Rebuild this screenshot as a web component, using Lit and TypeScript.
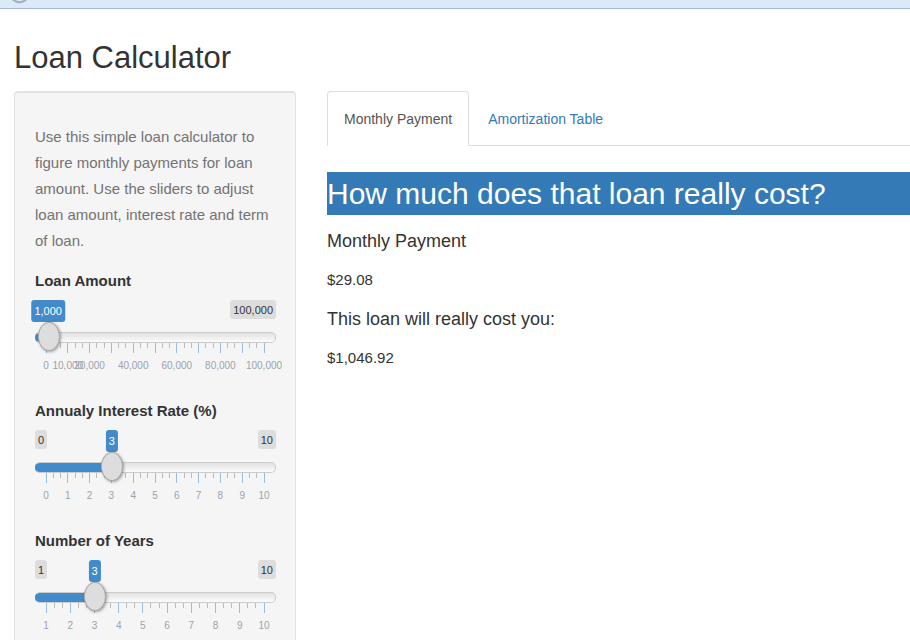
import { LitElement, html, css, svg } from "lit";
import { customElement, property, state } from "lit/decorators.js";

const grouped = (n: number) => n.toLocaleString("en-US");

@customElement("range-field")
class RangeField extends LitElement {
  @property() label = "";
  @property({ type: Number }) min = 0;
  @property({ type: Number }) max = 10;
  @property({ type: Number }) value = 0;
  @property({ type: Number }) step = 1;
  @property({ type: Number }) intervals = 10;
  @property({ type: Array }) marks: number[] = [];

  static styles = css`
    :host {
      display: block;
      height: 130px;
    }
    .name {
      display: block;
      font-weight: bold;
      line-height: 26px;
      margin-bottom: 6px;
    }
    .bubbles {
      position: relative;
      display: flex;
      justify-content: space-between;
      height: 22px;
      font-size: 11px;
      line-height: 20px;
    }
    .limit {
      height: 19px;
      padding: 0 3px;
      border-radius: 3px;
      background: #ddd;
    }
    .hidden {
      visibility: hidden;
    }
    .current {
      position: absolute;
      top: 0;
      padding: 0 3px;
      line-height: 22px;
      border-radius: 3px;
      background: #428bca;
      color: #fff;
      transform: translateX(-50%);
    }
    .slider {
      display: block;
      appearance: none;
      width: 100%;
      height: 30px;
      margin: 0;
      background: none;
      position: relative;
      cursor: pointer;
    }
    .slider::-webkit-slider-runnable-track {
      box-sizing: border-box;
      height: 11px;
      border: 1px solid #ccc;
      border-radius: 5px;
      background:
        linear-gradient(#428bca, #428bca) 0 0 / var(--fill) 100% no-repeat border-box,
        linear-gradient(#dedede, #fff) border-box;
    }
    .filled::-webkit-slider-runnable-track {
      border-left-color: #428bca;
    }
    .slider::-webkit-slider-thumb {
      appearance: none;
      box-sizing: border-box;
      width: 22px;
      height: 29px;
      margin-top: -11px;
      border: 1px solid #aaa;
      border-radius: 50%;
      background: #ddd;
      box-shadow: 1px 1px 3px rgba(0, 0, 0, 0.35);
    }
    .scale {
      margin: -9px 12px 0 11px;
    }
    .ticks {
      display: block;
      width: 100%;
      height: 10px;
      overflow: visible;
      shape-rendering: crispEdges;
    }
    .major {
      stroke: #99bddd;
    }
    .minor {
      stroke: #bbb;
    }
    .marks {
      position: relative;
      height: 14px;
      margin-top: 6px;
      font-size: 10px;
      line-height: 14px;
      color: #99a4ac;
    }
    .mark {
      position: absolute;
      transform: translateX(-50%);
    }
  `;

  private fraction(v: number) {
    return (v - this.min) / (this.max - this.min);
  }

  private onInput(e: Event) {
    this.value = Number((e.target as HTMLInputElement).value);
    this.dispatchEvent(new CustomEvent("value-change", { detail: this.value }));
  }

  render() {
    const f = this.fraction(this.value);
    const centre = `calc(11px + (100% - 22px) * ${f})`;
    const count = this.intervals * 3;
    const ticks = Array.from({ length: count + 1 }, (_, i) => {
      const x = `${(i / count) * 100}%`;
      const major = i % 3 === 0;
      return svg`<line class=${major ? "major" : "minor"} x1=${x} x2=${x} y1="0" y2=${major ? 10 : 5}></line>`;
    });
    return html`
      <label class="name" for="slider">${this.label}</label>
      <div class="bubbles">
        <span class="limit ${f < 0.08 ? "hidden" : ""}">${grouped(this.min)}</span>
        <span class="limit ${f > 0.92 ? "hidden" : ""}">${grouped(this.max)}</span>
        <output class="current" for="slider" style="left:${centre}">${grouped(this.value)}</output>
      </div>
      <input class="slider filled" id="slider" type="range" min=${this.min} max=${this.max} step=${this.step}
        .value=${String(this.value)} style="--fill:${centre}" @input=${this.onInput}>
      <div class="scale" aria-hidden="true">
        <svg class="ticks">${ticks}</svg>
        <div class="marks">
          ${this.marks.map((m) => html`<span class="mark" style="left:${this.fraction(m) * 100}%">${grouped(m)}</span>`)}
        </div>
      </div>
    `;
  }
}

@customElement("app-root")
class AppRoot extends LitElement {
  @state() private amount = 1000;
  @state() private rate = 3;
  @state() private years = 3;

  static styles = css`
    :host {
      display: block;
      height: 100vh;
      overflow: hidden;
      background: #fff;
      color: #333;
      font-family: "Liberation Sans", Arial, sans-serif;
      font-size: 15px;
      line-height: 26px;
    }
    .strip {
      height: 8px;
      border-bottom: 1px solid #a3bbd3;
      background: #dce9f6;
    }
    .strip-icon {
      display: block;
      width: 16px;
      height: 4px;
      margin-left: 12px;
    }
    .page {
      padding-left: 14px;
    }
    .title {
      margin: 0;
      padding: 27px 0 11px;
      font-size: 31px;
      font-weight: normal;
      line-height: 44px;
    }
    .columns {
      display: grid;
      grid-template-columns: 282fr 583fr;
      gap: 31px;
      align-items: start;
    }
    .well {
      min-width: 0;
      padding: 31px 19px 19px 20px;
      border: 1px solid #e3e3e3;
      border-top-width: 2px;
      border-radius: 4px;
      background: #f5f5f5;
    }
    .help {
      margin: 0 0 14px;
      color: #737373;
    }
    .tabs {
      display: flex;
      border-bottom: 1px solid #ddd;
      font-size: 14px;
    }
    .tab {
      padding: 14px 16px 13px;
      margin: 0 2px -1px 0;
      border: 1px solid transparent;
      border-radius: 4px 4px 0 0;
      color: #337ab7;
      text-decoration: none;
    }
    .active {
      border-color: #ddd;
      border-bottom-color: #fff;
      background: #fff;
      color: #555;
    }
    .banner {
      margin: 26px 0 13px;
      background: #337ab7;
      color: #fff;
      font-size: 30px;
      font-weight: normal;
      line-height: 43px;
    }
    .heading {
      margin: 0 0 13px;
      font-size: 18px;
      font-weight: normal;
      line-height: 26px;
    }
    .amount {
      margin: 0 0 13px;
    }
  `;

  private get payment() {
    const n = this.years * 12;
    const r = this.rate / 1200;
    return r === 0 ? this.amount / n : (this.amount * r) / (1 - Math.pow(1 + r, -n));
  }

  private money(v: number) {
    return v.toLocaleString("en-US", { style: "currency", currency: "USD" });
  }

  render() {
    const payment = this.payment;
    return html`
      <div class="strip">
        <svg class="strip-icon" viewBox="0 0 16 4" aria-hidden="true">
          <path d="M0 -2C3 3.500 12 3.500 15 -2" fill="none" stroke="#9fb0c3" stroke-width="2"></path>
        </svg>
      </div>
      <div class="page">
        <h1 class="title">Loan Calculator</h1>
        <div class="columns">
          <form class="well">
            <p class="help">
              Use this simple loan calculator to figure monthly payments for loan amount. Use the
              sliders to adjust loan amount, interest rate and term of loan.
            </p>
            <range-field label="Loan Amount" .min=${0} .max=${100000} .step=${1000} .value=${this.amount}
              .marks=${[0, 10000, 20000, 40000, 60000, 80000, 100000]}
              @value-change=${(e: CustomEvent) => (this.amount = e.detail)}></range-field>
            <range-field label="Annualy Interest Rate (%)" .min=${0} .max=${10} .value=${this.rate}
              .marks=${[0, 1, 2, 3, 4, 5, 6, 7, 8, 9, 10]}
              @value-change=${(e: CustomEvent) => (this.rate = e.detail)}></range-field>
            <range-field label="Number of Years" .min=${1} .max=${10} .intervals=${9} .value=${this.years}
              .marks=${[1, 2, 3, 4, 5, 6, 7, 8, 9, 10]}
              @value-change=${(e: CustomEvent) => (this.years = e.detail)}></range-field>
          </form>
          <main>
            <nav class="tabs">
              <a class="tab active" href="#payment" aria-current="page">Monthly Payment</a>
              <a class="tab" href="#amortization">Amortization Table</a>
            </nav>
            <h2 class="banner">How much does that loan really cost?</h2>
            <h3 class="heading">Monthly Payment</h3>
            <p class="amount">${this.money(payment)}</p>
            <h3 class="heading">This loan will really cost you:</h3>
            <p class="amount">${this.money(payment * this.years * 12)}</p>
          </main>
        </div>
      </div>
    `;
  }
}
